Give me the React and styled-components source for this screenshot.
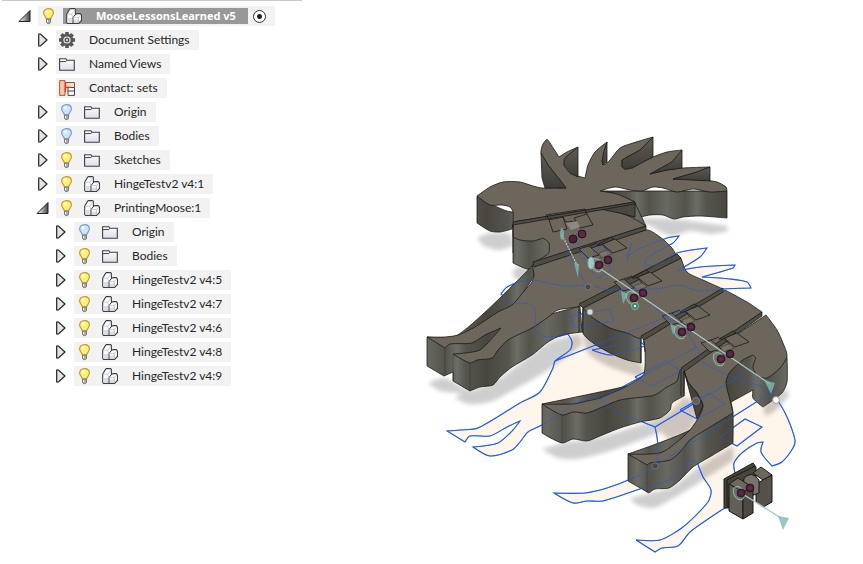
import { useState } from 'react'
import styled, { createGlobalStyle } from 'styled-components'

const GlobalStyle = createGlobalStyle`
  body {
    margin: 0;
    background: #ffffff;
    font-family: Lato, 'Noto Sans', sans-serif;
    font-size: 12px;
    color: #262626;
  }
`

const Page = styled.div`
  display: flex;
  align-items: flex-start;
`

const Browser = styled.nav`
  flex: 0 0 302px;
`

const Divider = styled.hr`
  height: 1px;
  margin: 0 0 5px 2px;
  border: none;
  background: #c9c9c9;
`

const Tree = styled.ul`
  display: flex;
  flex-direction: column;
  gap: 4px;
  margin: 0;
  padding: 0;
  list-style: none;
`

const Row = styled.li`
  display: flex;
  height: 20px;
  padding-left: ${({ $level }) => 20 + $level * 18}px;
`

const IconButton = styled.button`
  display: flex;
  align-items: center;
  flex: none;
  width: ${({ $width }) => $width}px;
  padding: 0;
  border: none;
  background: none;
  cursor: pointer;

  svg {
    overflow: visible;
  }
`

const Spacer = styled.span`
  width: 18px;
`

const Chip = styled.div`
  display: flex;
  align-items: center;
  gap: ${({ $active }) => ($active ? 5 : 9)}px;
  padding: 0 9px 0 3px;
  background: #f2f2f2;
`

const Name = styled.span`
  display: flex;
  align-items: center;
  gap: 14px;
  height: 16px;
  line-height: 16px;
  white-space: nowrap;

  ${({ $active }) =>
    $active &&
    `
    margin-left: 1px;
    padding: 0 12px 0 3px;
    background: #989898;
    color: #ffffff;
    font: bold 11px/16px 'Noto Sans', sans-serif;
  `}
`

const Radio = styled.input`
  appearance: none;
  width: 13px;
  height: 13px;
  margin: 0;
  border: 1px solid #333333;
  border-radius: 50%;
  background: #ffffff;

  &:checked {
    background: radial-gradient(circle, #222222 0 2px, #ffffff 3px);
  }
`

const Viewport = styled.main`
  flex: 1;
  min-width: 0;

  svg {
    display: block;
    width: 100%;
    height: auto;
  }
`

const items = [
  { id: 1, level: 0, name: 'MooseLessonsLearned v5', icon: 'part', bulb: true, arrow: 'open', active: true },
  { id: 2, level: 1, name: 'Document Settings', icon: 'gear', arrow: 'closed' },
  { id: 3, level: 1, name: 'Named Views', icon: 'folder', arrow: 'closed' },
  { id: 4, level: 1, name: 'Contact: sets', icon: 'contact' },
  { id: 5, level: 1, name: 'Origin', icon: 'folder', bulb: false, arrow: 'closed' },
  { id: 6, level: 1, name: 'Bodies', icon: 'folder', bulb: false, arrow: 'closed' },
  { id: 7, level: 1, name: 'Sketches', icon: 'folder', bulb: true, arrow: 'closed' },
  { id: 8, level: 1, name: 'HingeTestv2 v4:1', icon: 'part', bulb: true, arrow: 'closed' },
  { id: 9, level: 1, name: 'PrintingMoose:1', icon: 'part', bulb: true, arrow: 'open' },
  { id: 10, level: 2, name: 'Origin', icon: 'folder', bulb: false, arrow: 'closed' },
  { id: 11, level: 2, name: 'Bodies', icon: 'folder', bulb: true, arrow: 'closed' },
  { id: 12, level: 2, name: 'HingeTestv2 v4:5', icon: 'part', bulb: true, arrow: 'closed' },
  { id: 13, level: 2, name: 'HingeTestv2 v4:7', icon: 'part', bulb: true, arrow: 'closed' },
  { id: 14, level: 2, name: 'HingeTestv2 v4:6', icon: 'part', bulb: true, arrow: 'closed' },
  { id: 15, level: 2, name: 'HingeTestv2 v4:8', icon: 'part', bulb: true, arrow: 'closed' },
  { id: 16, level: 2, name: 'HingeTestv2 v4:9', icon: 'part', bulb: true, arrow: 'closed' },
]

const Arrow = ({ open }) => (
  <svg width='12' height='14' viewBox='0 0 12 14'>
    {open ? (
      <path d='M-1 12.5 L10 1.5 V12.5 Z' fill='url(#arrowFill)' stroke='#222' />
    ) : (
      <path d='M.7 1 H2.5 L9 7 L2.5 13 H.7 Z' fill='#e4e4e4' stroke='#222' strokeWidth='1.2' />
    )}
  </svg>
)

const Bulb = ({ on }) => (
  <svg width='16' height='18' viewBox='0 0 16 18'>
    <path
      d='M7.5 1.6 C4.2 1.6 2.6 3.8 2.6 6.1 C2.6 8.5 5.2 9.5 5.4 12 H9.6 C9.8 9.5 12.4 8.5 12.4 6.1 C12.4 3.8 10.8 1.6 7.5 1.6 Z'
      fill={on ? '#fff06c' : '#cfe2ff'}
      stroke={on ? '#c49a35' : '#7d9bd4'}
      strokeWidth='1.2'
    />
    <ellipse cx='6.2' cy='4.8' rx='1.8' ry='1.6' fill='#fff' opacity='.75' />
    <path d='M5.5 12 H9.5 V15.5 L8.5 16.6 H6.5 L5.5 15.5 Z' fill='#aaa' stroke='#666' strokeWidth='.8' />
    <path d='M6.5 13 V15' stroke='#fff' />
  </svg>
)

const icons = {
  part: (
    <>
      <path d='M.7 6.2 L3.6 1.2 L4.6 .6 H8.6 L9.4 1.5 V6.6 L11 5.6 H14.2 L15.5 7 V12.4 L12.6 15.4 H1.6 L.7 14.5 Z' fill='#fff' stroke='#3b3e47' strokeWidth='1.1' />
      <path d='M1.3 10 H6.4 V14.8 H1.3 Z M7.6 11.5 H12.2 V14.8 H7.6 Z' fill='#dddde3' />
      <path d='M7 9.4 V15.2 M9.3 6.6 L7 9.4' fill='none' stroke='#3b3e47' />
      <path d='M1 6.2 H5.6 L9 2 M5.6 6.2 L7 9.4 H12.4 L15.2 7 M12.4 9.4 V15' fill='none' stroke='#b9bbc2' strokeWidth='.8' />
    </>
  ),
  folder: (
    <>
      <path d='M.6 14.3 V2.7 H6.8 L8 4.3 H15.3 V14.3 Z' fill='url(#folderFill)' stroke='#3b3f4c' strokeWidth='1.1' />
      <path d='M1 5.6 H6.8 L8 4.3' fill='none' stroke='#3b3f4c' />
    </>
  ),
  gear: (
    <>
      {[0, 45, 90, 135].map((a) => (
        <path key={a} d='M8 0 V16' stroke='#575757' strokeWidth='3.6' transform={`rotate(${a} 8 8)`} />
      ))}
      <circle cx='8' cy='8' r='4.9' fill='#f2f2f2' stroke='#575757' strokeWidth='2.6' />
      <circle cx='8' cy='8' r='1.8' fill='#e4e4e4' stroke='#575757' strokeWidth='1.4' />
    </>
  ),
  contact: (
    <>
      <path d='M6.4 2.5 H15.5 V7.5 H6.4 Z' fill='#ffd9c2' stroke='#8c5138' />
      <path d='M.6 .6 H6 V15.4 H.6 Z' fill='#ffc4a0' stroke='#a35b38' />
      <path d='M9 7.5 H15.5 V15.4 H9 Z M9 11 H15.5' fill='#fff' stroke='#444' />
      <path d='M6.5 2.5 V12 M6.5 7.4 H12' stroke='#f02c1c' strokeWidth='1.3' />
    </>
  ),
}

// Turns a "x,y x,y" list into a path: gentle bends are rounded, sharp ones stay corners
const trace = (text, closed = true) => {
  const pts = text.split(' ').map((p) => p.split(',').map(Number))
  const n = pts.length
  const at = (i) => (closed ? pts[(i + n) % n] : pts[Math.max(0, Math.min(n - 1, i))])
  const tangent = (i) => {
    const [a, b, c] = [at(i - 1), at(i), at(i + 1)]
    const before = Math.atan2(b[1] - a[1], b[0] - a[0])
    const after = Math.atan2(c[1] - b[1], c[0] - b[0])
    if (Math.cos(after - before) < 0.62) return [0, 0]
    const len = Math.hypot(c[0] - a[0], c[1] - a[1]) || 1
    return [(c[0] - a[0]) / len, (c[1] - a[1]) / len]
  }
  let d = `M${pts[0]}`
  for (let i = 0; i < (closed ? n : n - 1); i++) {
    const [b, c, s, t] = [at(i), at(i + 1), tangent(i), tangent(closed ? (i + 1) % n : i + 1)]
    const k = Math.hypot(c[0] - b[0], c[1] - b[1]) * 0.25
    d += ` C${b[0] + s[0] * k},${b[1] + s[1] * k} ${c[0] - t[0] * k},${c[1] - t[1] * k} ${c}`
  }
  return closed ? d + 'Z' : d
}

const shadows = [
  '477,238 490,233 510,233 514,245 500,250 484,246',
  '514,268 534,264 536,278 522,281 513,277',
  '636,218 674,219 727,226 728,231 712,234 690,231 672,236 650,226',
  '428,383 445,378 470,390 500,378 550,342 580,334 582,345 545,372 510,392 490,402 468,404 455,398 462,393 440,391',
  '542,449 563,443 600,437 660,418 672,410 684,408 670,427 610,451 577,459 558,458',
  '630,498 650,493 672,487 700,466 733,446 734,460 700,482 672,499 654,508 637,505',
  '763,407 787,388 789,396 774,412 765,416',
]

const sketchFills = [
  '501,294 507,287 522,281 533,280 548,283 536,322 530,304 513,303',
  '555,361 570,350 572,342 568,334 584,330 641,360 645,376 660,395 655,427 640,421 617,412 600,399 587,400 573,404 563,412 542,425 528,432 520,442 512,450 490,456 473,447 498,443 513,430 520,421 507,427 490,436 470,436 465,442 447,431 460,430 478,428 520,403 538,392 553,368',
  '655,427 660,405 690,380 760,395 777,400 787,417 795,440 793,448 782,462 772,466 761,452 763,442 757,443 743,452 734,463 735,473 737,500 717,513 690,532 678,546 662,548 655,552 636,540 660,540 683,527 708,502 711,490 703,477 697,462 688,460 673,478 643,488 603,501 587,501 573,503 554,493 585,493 607,488 633,478 655,466 658,450',
  '677,253 707,248 700,257 682,271 700,267 735,266 733,268 702,277 730,279 747,282 751,288 723,289 690,280 675,260',
]

const sketchLines = [
  '588,285 565,286 548,283 533,280 522,281 507,287 501,294 513,303 530,304 535,310 536,330 542,336 555,337 568,334 572,342 570,350 555,361 553,368 540,392 520,403 478,428 460,430 447,431 465,442 470,436 490,436 507,427 520,421 513,430 498,443 473,447 490,456 512,450 520,442 528,432 542,425 563,412 573,404 587,400 600,399 617,412 640,421 655,427 657,437 658,450 655,466 633,478 607,488 585,493 554,493 573,503 587,501 603,501 643,488 673,478 688,460 697,462 703,477 711,490 708,502 683,527 660,540 636,540 655,552 662,548 678,546 690,532 717,513 737,500 741,493 735,473 734,463 743,452 757,443 763,442 761,452 772,466 782,462 793,448 795,440 787,417 777,400 762,387 738,379 704,363 697,348 682,325 666,317 650,303',
  '574,239 566,248 577,270 588,287',
  '574,239 581,247 580,258 590,258 602,245 608,253 610,272 598,278 590,270',
  '627,263 630,248 632,242 627,257 637,250 667,238 679,236 673,243 647,258 645,266 655,265 677,253 707,248 700,257 677,271 700,267 735,265 733,268 702,277 730,279 747,282 751,288 723,289 700,291 678,285 657,289 640,288 610,290 594,286',
  '555,361 690,308',
  '570,316 610,309 614,321 575,328 570,316',
  '592,350 640,341 645,346 611,355 592,350',
  '635,377 666,361 681,371 651,386 635,377',
  '600,399 697,347',
  '655,427 745,373',
  '680,410 709,393 725,404 697,419 680,410',
  '720,437 745,419 762,427 737,446 720,437',
  '655,466 777,389',
]

// Each plate of the moose: side wall first, then the top face over it
const bodies = [
  {
    wall: '513,224 635,203 646,226 549,256 546,263 533,268 527,269 513,263',
    top: '513,224 600,209 620,213 633,218 646,226 533,263 542,258 549,253 549,243 543,238 533,241 520,240 513,237',
  },
  {
    wall: '533,265 534,275 525,290 501,328 580,306 582,332 562,335 548,342 532,355 512,367 500,377 493,385 480,387 470,391 453,381 453,372 444,376 427,366 427,337 458,335',
    top: '532,265 646,230 660,237 672,248 677,257 580,306 558,310 547,318 532,328 508,340 498,350 492,358 477,360 470,363 453,354 465,353 480,350 495,335 501,328 485,335 472,343 450,344 445,348 427,337 445,337 458,335 475,327 498,312 512,305 525,290 532,282 534,275',
  },
  {
    wall: '583,308 641,337 641,363 627,360 610,353 593,343 583,333',
    top: '583,308 681,258 687,272 703,280 723,289 641,338 627,333 610,328 593,318',
  },
  {
    wall: '542,404 640,383 681,369 684,372 684,396 672,403 670,410 660,418 640,422 620,428 600,436 587,441 573,439 562,443 542,433',
    top: '643,339 725,290 747,302 762,312 681,369 677,381 667,387 655,395 643,397 620,400 600,408 587,413 573,412 562,415 542,404 573,404 587,401 600,398 625,387 637,380 644,374 645,350',
  },
  {
    wall: '684,370 730,360 756,345 787,357 787,382 782,393 763,407 753,398 753,390 731,402 733,413 733,443 713,455 693,467 680,480 669,488 655,489 649,493 628,481 628,454 690,430 700,415',
    top: '684,370 766,315 777,330 783,343 787,356 780,368 767,378 758,377 753,368 756,358 753,355 743,360 730,372 726,382 730,400 733,413 710,427 690,440 680,452 670,460 650,463 647,465 628,454 660,453 677,442 690,430 700,415 703,405 697,393 688,382',
  },
]

const headWall = '477,196 513,212 600,191 635,202 620,213 600,211 513,225 512,229 500,232 490,231 477,223'
const headTop =
  '477,196 490,187 503,182 520,182 533,186 542,188 566,188 560,180 548,165 541,153 543,144 547,139 550,143 559,157 567,152 578,147 574,151 565,158 564,165 570,173 585,178 588,165 595,152 607,142 604,153 602,162 605,165 610,160 620,148 633,143 653,137 650,142 640,150 627,157 622,160 622,167 625,169 632,168 643,162 653,157 667,152 682,150 678,157 672,162 650,174 667,170 683,168 710,167 697,172 673,179 703,180 717,182 726,187 727,191 710,192 693,189 677,192 663,188 653,187 642,191 630,190 615,187 600,191 617,194 635,202 513,222 513,212 510,207 502,205 490,205'
const antlerWalls = [
  'M541 153 L548 165 L560 180 L566 188 L545 188 L542 178 Z',
  'M578 147 V177 L570 173 L564 165 L565 158 Z',
  'M607 142 V162 L603 165 L602 161 L604 151 Z',
  'M653 137 V157 L643 162 L632 168 L625 169 L622 167 L622 160 L640 150 Z',
  'M682 150 V168 L667 170 L650 174 L672 162 Z',
  'M710 167 V181 L673 179 L697 172 Z',
]

const seams = [
  'M513 222 L635 202 V204 L513 225 Z',
  'M533 262 L646 226 V230 L534 267 Z',
  'M579 304 L677 254 L681 258 L583 308 Z',
  'M641 336 L723 288 V292 L644 340 Z',
  'M681 368 L762 312 V316 L685 371 Z',
]

const joints = [
  [573, 239],
  [599, 265],
  [634, 298],
  [682, 332],
  [721, 359],
]

const cones = [
  'M574 263 L579 264 L578 278 Z',
  'M621 291 L628 294 L623 304 Z',
  'M670 323 L676 327 L673 335 Z',
  'M764 380 L775 383 L771 394 Z',
  'M778 516 L789 518 L783 530 Z',
]

const Joint = ({ x, y }) => (
  <g transform={`translate(${x} ${y})`}>
    <ellipse cx='-2' cy='-1' rx='5' ry='7' transform='rotate(-30)' fill='#8fb9af' fillOpacity='.2' stroke='#8ecac2' strokeOpacity='.8' />
    <circle r='4' fill='#4c2038' stroke='#25131d' strokeWidth='.8' />
    <circle r='2' fill='#65284a' />
    <circle cx='9' cy='-5' r='4' fill='#4c2038' stroke='#25131d' strokeWidth='.8' />
    <circle cx='9' cy='-5' r='2' fill='#65284a' />
  </g>
)

const Moose = () => (
  <svg viewBox='302 0 561 564' role='img' aria-label='Hinged moose model'>
    <defs>
      <linearGradient id='arrowFill'>
        <stop offset='.2' stopColor='#ddd' />
        <stop offset='1' stopColor='#444' />
      </linearGradient>
      <linearGradient id='folderFill' x2='0' y2='1'>
        <stop stopColor='#fff' />
        <stop offset='1' stopColor='#dcdee6' />
      </linearGradient>
      <linearGradient id='wall' gradientUnits='userSpaceOnUse' x1='427' x2='487' y1='0' y2='0' spreadMethod='reflect'>
        <stop stopColor='#686961' />
        <stop offset='.3' stopColor='#53534c' />
        <stop offset='.5' stopColor='#6c6d65' />
        <stop offset='.65' stopColor='#55554e' />
        <stop offset='1' stopColor='#48463f' />
      </linearGradient>
      <linearGradient id='antler' x2='0' y2='1'>
        <stop stopColor='#5e5b53' />
        <stop offset='1' stopColor='#3e3d37' />
      </linearGradient>
      <filter id='soft' x='-20%' y='-20%' width='140%' height='140%'>
        <feGaussianBlur stdDeviation='2' />
      </filter>
    </defs>

    {sketchFills.map((s) => (
      <path key={s} d={trace(s)} fill='#fff6eb' />
    ))}
    <g fill='#000' opacity='.19' filter='url(#soft)'>
      {shadows.map((s) => (
        <path key={s} d={trace(s)} />
      ))}
      <path d={trace('583,334 641,364 644,378 610,367 588,353')} />
      <path d={trace('655,427 684,397 703,405 690,430 670,440')} />
    </g>
    <g fill='none' stroke='#1f5cff' strokeWidth='1.1'>
      {sketchLines.map((s) => (
        <path key={s} d={trace(s, false)} />
      ))}
    </g>

    <g stroke='#1c1b18' strokeWidth='.8' strokeLinejoin='round'>
      <path d={trace('635,203 600,191 727,191 727,218 700,216 683,217 674,219 663,215 650,215 637,218')} fill='url(#wall)' />
      <path d={trace(headWall)} fill='url(#wall)' />
      {bodies.map((b) => (
        <g key={b.top}>
          <path d={trace(b.wall)} fill='url(#wall)' />
          <path d={trace(b.top)} fill='#6c665c' />
        </g>
      ))}
      <path d='M600 209 L635 203 V217 L620 213 Z' fill='#4a4840' />
      <path d='M684 371 L697 419 L703 406 L697 393 L688 382 Z' fill='#45423b' />
      <path d='M641 338 V363 M644 341 L645 352 M681 370 V396 M684 372 V396 M579 306 V332 M583 308 V333 M513 225 V253' fill='none' />
      <path d='M445 348 V376 M453 354 V381 M470 363 V391 M562 415 V443 M647 465 V493' fill='none' strokeOpacity='.35' />
      <path d={trace(headTop)} fill='#6c665c' />
      {antlerWalls.map((d) => (
        <path key={d} d={d} fill='url(#antler)' />
      ))}
      {seams.map((d) => (
        <path key={d} d={d} fill='#4f4c43' />
      ))}
      <g fill='#6c665c'>
        <path d='M549 220 L563 217 L567 229 L553 232 Z M574 218 L587 214 L593 225 L580 228 Z' />
        <path d='M546 215 L585 209 L587 214 M546 215 L549 220 M563 217 L566 222 L577 221' fill='none' />
      </g>
      {joints.slice(1).map(([x, y]) => (
        <g key={x} transform={`translate(${x} ${y})`}>
          <path d='M-20 -16 L-10 -19 L0 -10 L-11 -7 Z' fill='#6c665c' />
          <path d='M3 -21 L16 -26 L28 -17 L14 -12 Z' fill='#6c665c' />
          <path d='M-2 -20 L12 -28 L15 -26 L2 -20 Z' fill='#4b483f' />
          <path d='M0 -12 L8 -15 L13 -11 L2 -7 Z' fill='#7b7467' strokeWidth='.4' />
          <path d='M-10 -19 L-2 -22 M3 -21 L8 -15' fill='none' />
        </g>
      ))}
    </g>
    <path d='M566 223 L577 221 L580 227 L571 230 Z' fill='#8f887c' />

    <g fill='none' stroke='#2458d8' strokeWidth='1' opacity='.55'>
      {sketchLines.map((s) => (
        <path key={s} d={trace(s, false)} />
      ))}
    </g>

    <g stroke='#191815' strokeWidth='1' strokeLinejoin='round'>
      <path d='M724 479 L753 463 L756 467 V482 L729 497 V508 H724 Z' fill='#48453b' />
      <path d='M727 480 L755 466 M727 480 V507' fill='none' />
      <path d='M753 473 L761 467 L772 475 L763 480 Z' fill='#6b675b' />
      <path d='M763 480 L772 475 V502 L763 507 L756 502 V484 Z' fill='#54514a' />
      <path d='M744 478 Q752 470 759 480 V493 L751 496 L743 486 Z' fill='#77736a' />
      <path d='M729 484 L738 478 L752 487 L743 492 Z' fill='#6c685c' />
      <path d='M729 484 L743 492 V519 L729 511 Z' fill='#625f58' />
      <path d='M743 492 L753 487 V513 L743 519 Z' fill='#4d4a42' />
    </g>

    <g stroke='#a9c7c4' strokeWidth='1.3' fill='none'>
      <path d='M562 235 L577 265' strokeDasharray='2 1' />
      <path d='M592 263 L770 384 M741 493 L781 518' />
    </g>
    <g fill='#7bbab5' fillOpacity='.8'>
      {cones.map((d) => (
        <path key={d} d={d} />
      ))}
      <ellipse cx='562' cy='234' rx='2' ry='6' />
      <ellipse cx='591' cy='263' rx='3' ry='6' fill='#c5dfda' stroke='#75b9b2' />
    </g>
    {joints.slice(1).map(([x, y]) => (
      <Joint key={x} x={x} y={y} />
    ))}
    <circle cx='573' cy='239' r='4' fill='#4c2038' stroke='#25131d' />
    <circle cx='582' cy='234' r='4' fill='#5d2943' stroke='#25131d' />
    <Joint x={741} y={493} />

    <circle cx='635' cy='306' r='3.5' fill='#39796b' stroke='#78c19b' />
    <circle cx='635' cy='306' r='1.2' fill='#e2fff3' />
    <g fill='#47484a' stroke='#85878c' strokeOpacity='.7'>
      <circle cx='588' cy='287' r='3' />
      <circle cx='655' cy='466' r='3.2' />
      <circle cx='696' cy='401' r='3.6' fill='#625f58' />
    </g>
    <circle cx='590' cy='312' r='3' fill='#d9dadb' stroke='#929292' />
    <circle cx='776' cy='400' r='3.4' fill='#fff' stroke='#999' />
  </svg>
)

const TreeItem = ({ item }) => {
  const [visible, setVisible] = useState(item.bulb)

  return (
    <Row $level={item.level}>
      {item.arrow ? (
        <IconButton $width={18} aria-label={`Expand ${item.name}`} aria-expanded={item.arrow === 'open'}>
          <Arrow open={item.arrow === 'open'} />
        </IconButton>
      ) : (
        <Spacer />
      )}
      <Chip $active={item.active}>
        {item.bulb !== undefined && (
          <IconButton $width={16} aria-label={`Show ${item.name}`} aria-pressed={visible} onClick={() => setVisible(!visible)}>
            <Bulb on={visible} />
          </IconButton>
        )}
        <Name $active={item.active}>
          <svg width='16' height='16' viewBox='0 0 16 16' aria-hidden='true'>
            {icons[item.icon]}
          </svg>
          {item.name}
        </Name>
        {item.active && <Radio type='radio' name='active-component' aria-label={`Activate ${item.name}`} defaultChecked />}
      </Chip>
    </Row>
  )
}

const App = () => (
  <>
    <GlobalStyle />
    <Page>
      <Browser aria-label='Browser'>
        <Divider />
        <Tree>
          {items.map((item) => (
            <TreeItem key={item.id} item={item} />
          ))}
        </Tree>
      </Browser>
      <Viewport>
        <Moose />
      </Viewport>
    </Page>
  </>
)

export default App
